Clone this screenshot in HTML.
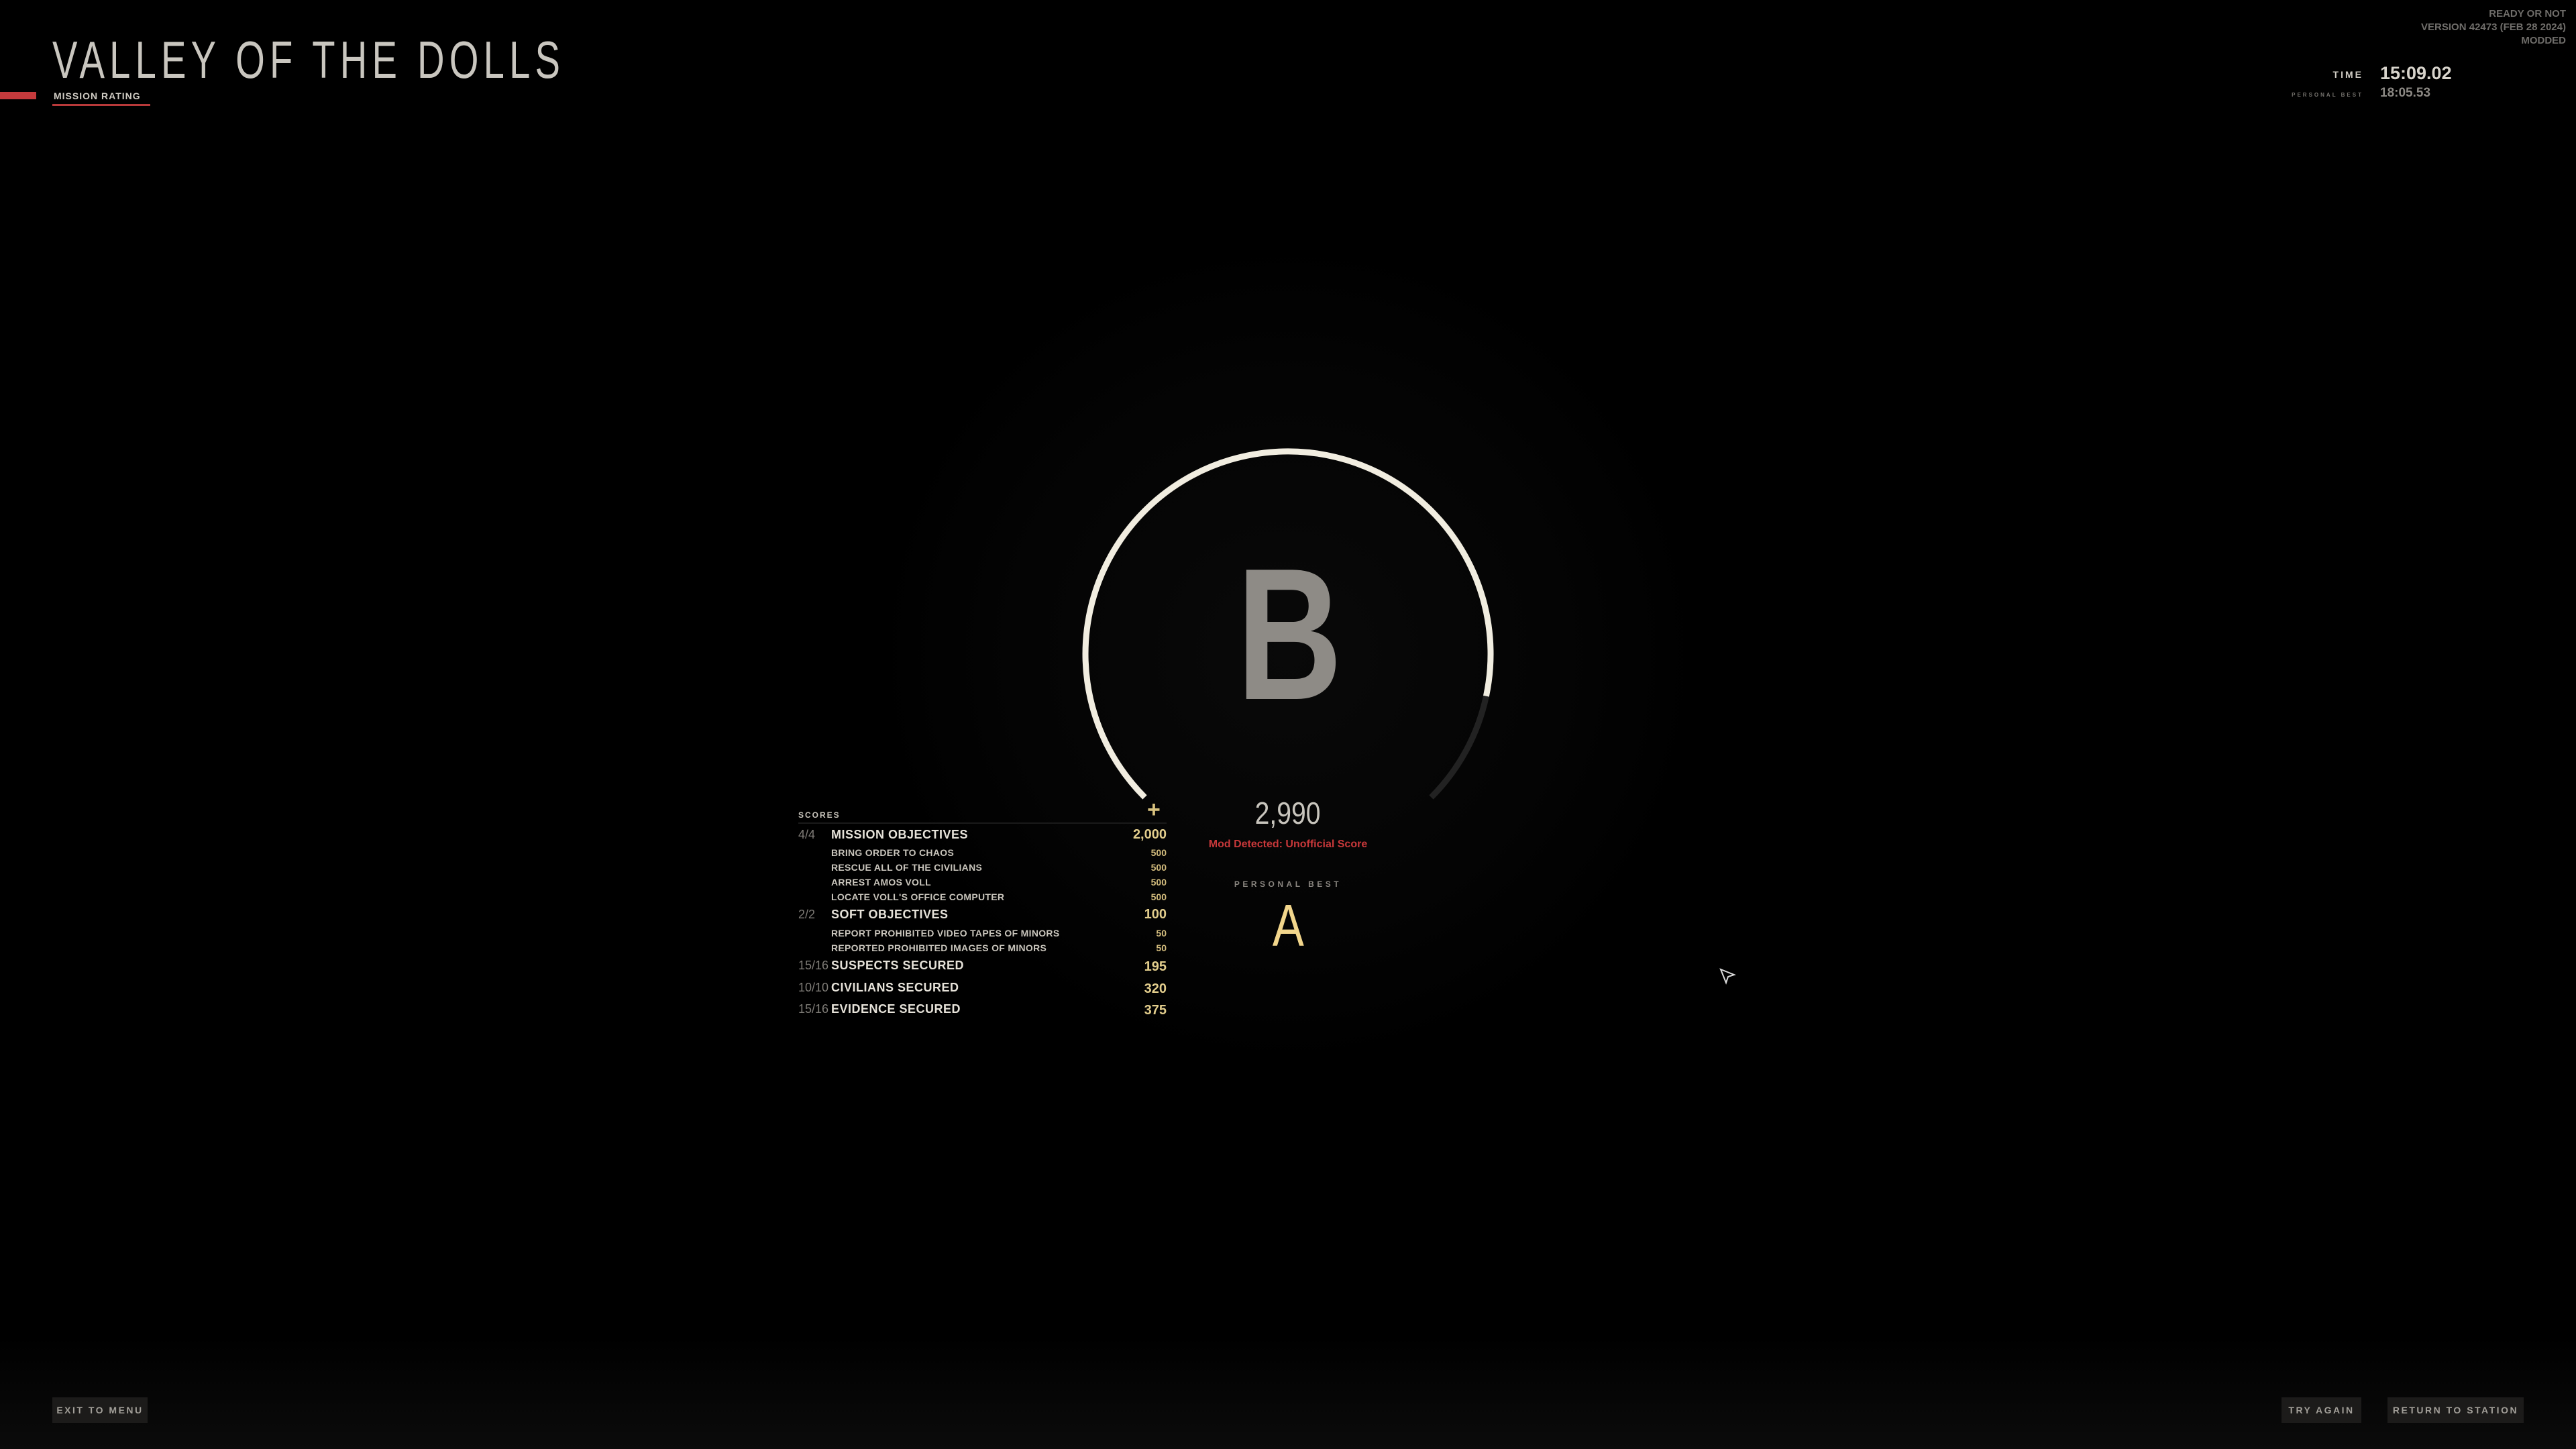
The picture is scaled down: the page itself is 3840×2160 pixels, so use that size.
<!DOCTYPE html>
<html><head><meta charset="utf-8"><style>
*{margin:0;padding:0;box-sizing:border-box}
body{width:3840px;height:2160px;background:#000;position:relative;overflow:hidden;font-family:"Liberation Sans",sans-serif}
.a{position:absolute;white-space:nowrap}
.r{text-align:right}
.btn{position:absolute;top:2083px;height:38px;background:#1c1b1a;color:#a29f99;font-weight:bold;font-size:14px;letter-spacing:2.5px;line-height:38px;text-align:center}
.lab{color:#e6e2d9;font-weight:bold;font-size:18px;letter-spacing:.5px}
.sub{color:#c9c5bc;font-weight:bold;font-size:14px;letter-spacing:.3px}
.fr{color:#7f7c77;font-size:18px}
.num{color:#e2cd8c;font-weight:bold;font-size:20px}
.sn{color:#d4bd7e;font-weight:bold;font-size:14px}
</style></head><body>
<div class="a" style="left:0;top:0;width:3840px;height:2160px;background:radial-gradient(circle at 1920px 975px,#090909 0,#040404 400px,#000 620px)"></div>
<div class="a" style="left:0;top:1990px;width:3840px;height:170px;background:linear-gradient(#000,#0b0b0b)"></div>

<!-- title -->
<div class="a" style="left:78px;top:44px;font-size:78px;line-height:90px;color:#c9c6bf;letter-spacing:10px;transform:scaleX(.72);transform-origin:left">VALLEY OF THE DOLLS</div>
<div class="a" style="left:0;top:137px;width:54px;height:11px;background:#c53a3c"></div>
<div class="a" style="left:80px;top:134px;font-size:14px;font-weight:bold;letter-spacing:1px;color:#d0ccc4;line-height:18px">MISSION RATING</div>
<div class="a" style="left:78px;top:155px;width:146px;height:3px;background:#b8393a"></div>

<!-- top right -->
<div class="a r" style="right:15px;top:11px;font-size:15px;font-weight:bold;color:#6f6d6a;line-height:20px">READY OR NOT<br>VERSION 42473 (FEB 28 2024)<br>MODDED</div>
<div class="a r" style="right:317px;top:102px;font-size:14px;font-weight:bold;letter-spacing:3px;color:#d0ccc4;line-height:18px">TIME</div>
<div class="a" style="left:3548px;top:92px;font-size:27px;font-weight:bold;color:#d8d4cc;line-height:34px">15:09.02</div>
<div class="a r" style="right:317px;top:136px;font-size:8px;font-weight:bold;letter-spacing:3px;color:#77746f;line-height:12px">PERSONAL BEST</div>
<div class="a" style="left:3548px;top:127px;font-size:19px;font-weight:bold;color:#8c8984;line-height:24px">18:05.53</div>

<!-- arc -->
<svg class="a" style="left:0;top:0" width="3840" height="2160">
<path d="M1706.5 1188.5 A302 302 0 1 1 2215.4 1037.8" fill="none" stroke="#f1ede0" stroke-width="9"/>
<path d="M2215.4 1037.8 A302 302 0 0 1 2133.5 1188.5" fill="none" stroke="#222" stroke-width="9"/>
<path d="M2565 1445 L2585 1453 L2576 1456 L2573 1465 Z" fill="none" stroke="#ddd" stroke-width="2"/>
</svg>
<div class="a" style="left:1722px;top:796px;width:400px;text-align:center;font-size:280px;font-weight:bold;line-height:300px;color:#8e8b86"><span style="display:inline-block;transform:scaleX(.78)">B</span></div>

<!-- score panel -->
<div class="a" style="left:1190px;top:1208px;font-size:12px;font-weight:bold;letter-spacing:2px;color:#c9c5bc;line-height:14px">SCORES</div>
<div class="a" style="left:1710px;top:1189px;font-size:34px;font-weight:bold;color:#d8c27f;line-height:36px">+</div>
<div class="a" style="left:1190px;top:1226px;width:549px;height:2px;background:#1a1a1a"></div>

<div class="a fr" style="left:1190px;top:1234px">4/4</div>
<div class="a lab" style="left:1239px;top:1234px">MISSION OBJECTIVES</div>
<div class="a num r" style="right:2101px;top:1233px">2,000</div>
<div class="a sub" style="left:1239px;top:1263px">BRING ORDER TO CHAOS</div><div class="a sn r" style="right:2101px;top:1263px">500</div>
<div class="a sub" style="left:1239px;top:1285px">RESCUE ALL OF THE CIVILIANS</div><div class="a sn r" style="right:2101px;top:1285px">500</div>
<div class="a sub" style="left:1239px;top:1307px">ARREST AMOS VOLL</div><div class="a sn r" style="right:2101px;top:1307px">500</div>
<div class="a sub" style="left:1239px;top:1329px">LOCATE VOLL'S OFFICE COMPUTER</div><div class="a sn r" style="right:2101px;top:1329px">500</div>

<div class="a fr" style="left:1190px;top:1353px">2/2</div>
<div class="a lab" style="left:1239px;top:1353px">SOFT OBJECTIVES</div>
<div class="a num r" style="right:2101px;top:1352px">100</div>
<div class="a sub" style="left:1239px;top:1383px">REPORT PROHIBITED VIDEO TAPES OF MINORS</div><div class="a sn r" style="right:2101px;top:1383px">50</div>
<div class="a sub" style="left:1239px;top:1405px">REPORTED PROHIBITED IMAGES OF MINORS</div><div class="a sn r" style="right:2101px;top:1405px">50</div>

<div class="a fr" style="left:1190px;top:1429px">15/16</div><div class="a lab" style="left:1239px;top:1429px">SUSPECTS SECURED</div><div class="a num r" style="right:2101px;top:1430px">195</div>
<div class="a fr" style="left:1190px;top:1462px">10/10</div><div class="a lab" style="left:1239px;top:1462px">CIVILIANS SECURED</div><div class="a num r" style="right:2101px;top:1463px">320</div>
<div class="a fr" style="left:1190px;top:1494px">15/16</div><div class="a lab" style="left:1239px;top:1494px">EVIDENCE SECURED</div><div class="a num r" style="right:2101px;top:1495px">375</div>

<!-- total -->
<div class="a" style="left:1720px;top:1184px;width:400px;text-align:center;font-size:46px;line-height:56px;color:#c8c5bd"><span style="display:inline-block;transform:scaleX(.85)">2,990</span></div>
<div class="a" style="left:1720px;top:1249px;width:400px;text-align:center;font-size:16px;font-weight:bold;line-height:20px;color:#c8383a">Mod Detected: Unofficial Score</div>
<div class="a" style="left:1720px;top:1310px;width:400px;text-align:center;font-size:12px;font-weight:bold;letter-spacing:4.5px;line-height:16px;color:#8a8680">PERSONAL BEST</div>
<div class="a" style="left:1720px;top:1330px;width:400px;text-align:center;font-size:88px;line-height:100px;color:#f2d68c"><span style="display:inline-block;transform:scaleX(.8)">A</span></div>

<!-- buttons -->
<div class="btn" style="left:78px;width:142px">EXIT TO MENU</div>
<div class="btn" style="left:3401px;width:119px">TRY AGAIN</div>
<div class="btn" style="left:3559px;width:203px">RETURN TO STATION</div>
</body></html>
